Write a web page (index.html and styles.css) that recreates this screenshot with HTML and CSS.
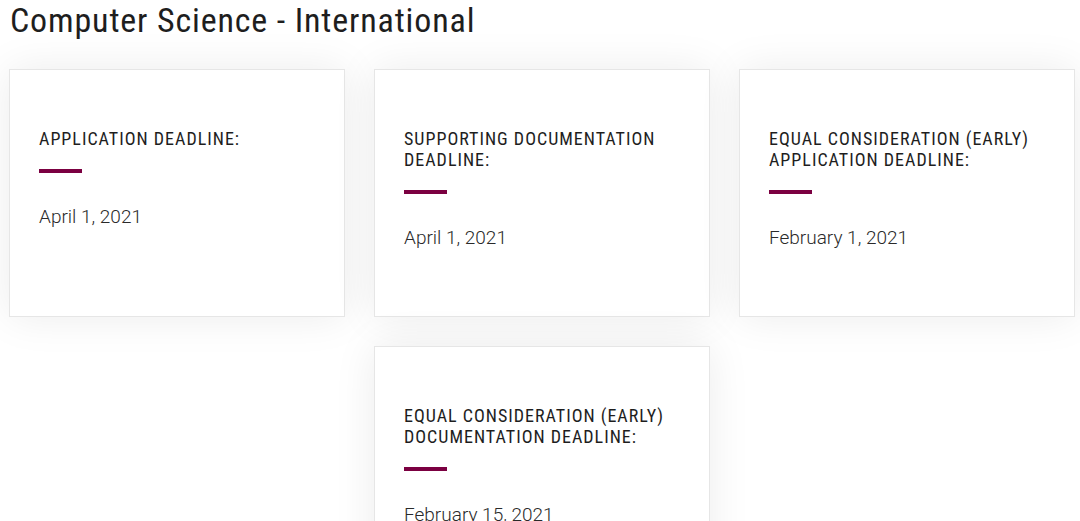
FILE: index.html
```html
<!DOCTYPE html>
<html lang="en">
<head>
    <meta charset="UTF-8">
    <meta name="viewport" content="width=device-width, initial-scale=1.0">
    <title>Computer Science - International</title>
    <link rel="stylesheet" href="styles.css">
</head>
<body>

    <h2 class="program-title">Computer Science - International</h2>

    <!-- deadline cards -->
    <div class="deadlines">
        <div class="deadline-card">
            <h3>Application Deadline:</h3>
            <p>April 1, 2021</p>
        </div>
        <div class="deadline-card">
            <h3>Supporting Documentation Deadline:</h3>
            <p>April 1, 2021</p>
        </div>
        <div class="deadline-card">
            <h3>Equal Consideration (Early) Application Deadline:</h3>
            <p>February 1, 2021</p>
        </div>
        <div class="deadline-card">
            <h3>Equal Consideration (Early) Documentation Deadline:</h3>
            <p>February 15, 2021</p>
        </div>
    </div>

</body>
</html>
```

FILE: styles.css
```css
body {
    margin: 0;
    padding: 0 5px 0 9px;
    font-family: Roboto, "Liberation Sans", sans-serif;
    color: #222;
    background: #fff;
}

.program-title {
    font-family: "Roboto Condensed", "Liberation Sans Narrow", "DejaVu Sans Condensed", sans-serif;
    font-stretch: condensed;
    font-weight: 400;
    font-size: 34px;
    letter-spacing: 0.85px;
    line-height: 40px;
    margin: 0 0 29px 1px;
    color: #1e1e1e;
}

.deadlines {
    display: flex;
    flex-wrap: wrap;
    justify-content: center;
    gap: 29px;
}

.deadline-card {
    box-sizing: border-box;
    width: calc((100% - 58px) / 3);
    min-height: 248px;
    padding: 58px 29px 60px;
    background: #fff;
    border: 1px solid #e6e6e6;
    box-shadow: 0 0 40px rgba(0, 0, 0, 0.08);
}

.deadline-card h3 {
    font-family: "Roboto Condensed", "Liberation Sans Narrow", "DejaVu Sans Condensed", sans-serif;
    font-stretch: condensed;
    font-weight: 400;
    font-size: 18px;
    line-height: 21px;
    letter-spacing: 1px;
    text-transform: uppercase;
    margin: 0;
    color: #1e1e1e;
}

/* short maroon rule under the heading */
.deadline-card h3::after {
    content: "";
    display: block;
    width: 43px;
    height: 4px;
    margin-top: 20px;
    background: #7b0041;
}

.deadline-card p {
    font-size: 19px;
    font-weight: 300;
    line-height: 24px;
    margin: 32px 0 0;
    color: #2a2a2a;
}
```
